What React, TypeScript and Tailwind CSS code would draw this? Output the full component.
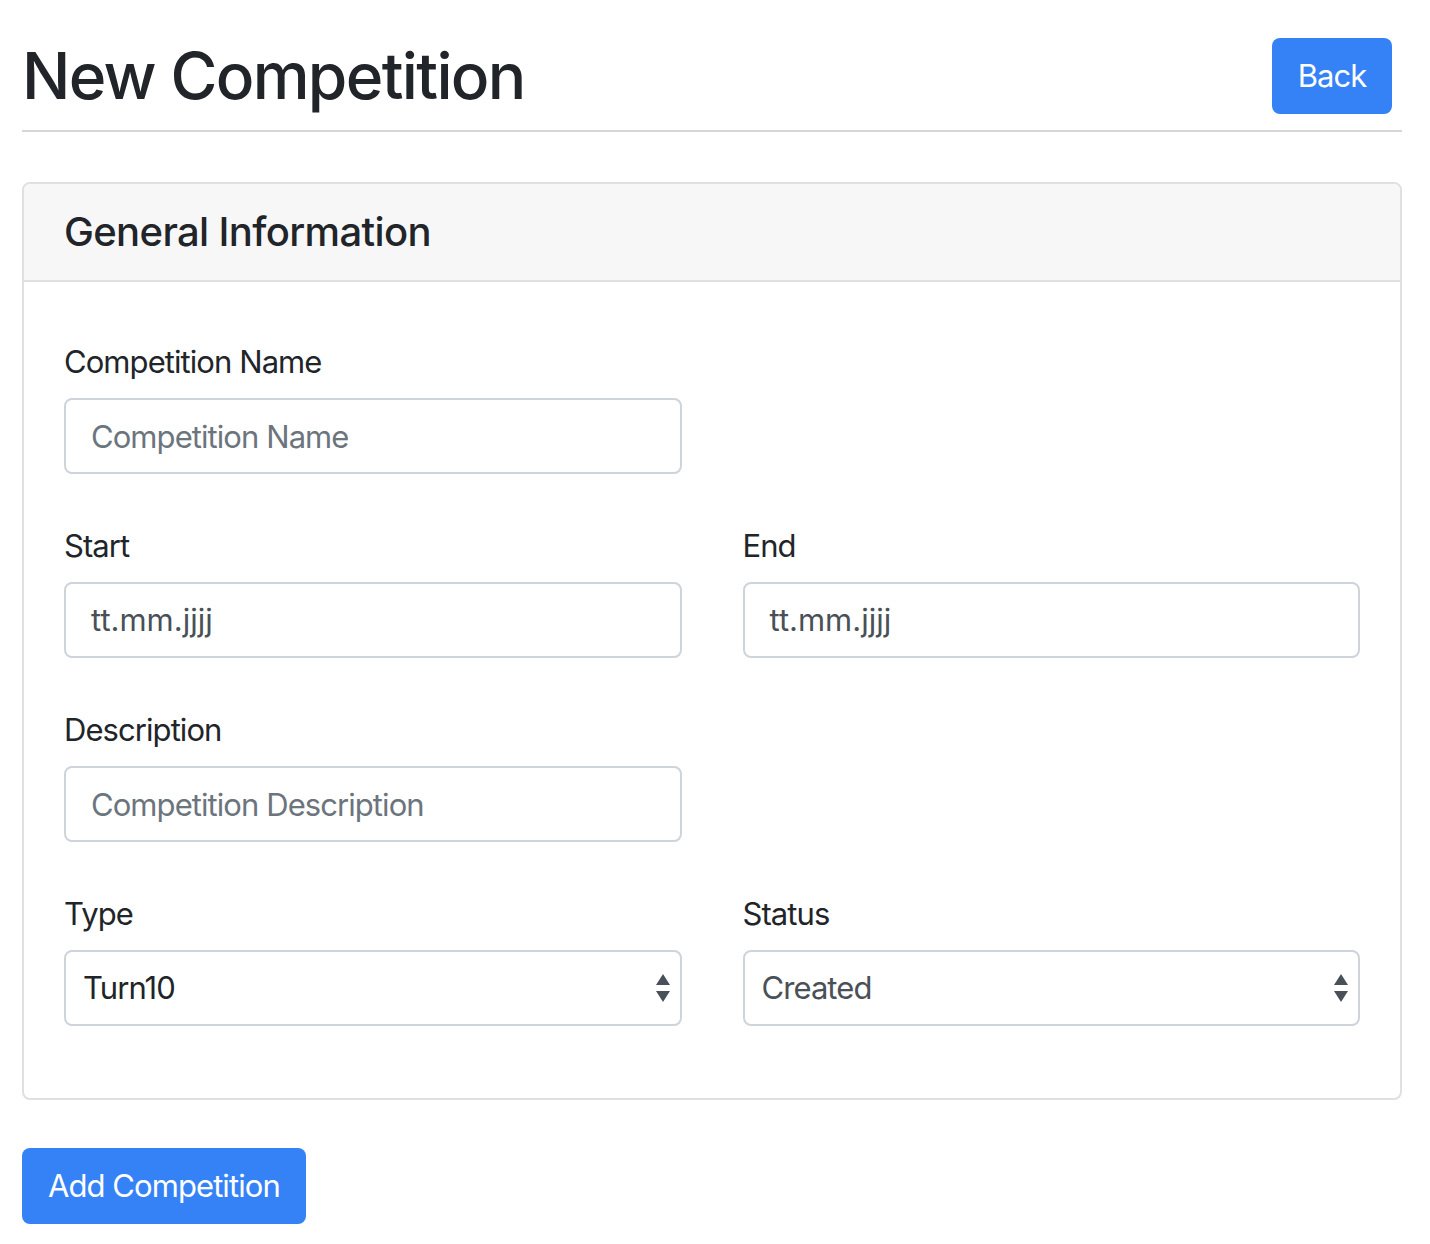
import { ReactNode } from "react";

const font = { fontFamily: "Inter, 'Noto Sans', sans-serif" };

function SelectArrows() {
  return (
    <svg width="14" height="28" viewBox="0 0 14 28" className="shrink-0">
      <path d="M7 0 L14 11 L0 11 Z" fill="#495057" />
      <path d="M0 17 L14 17 L7 28 Z" fill="#495057" />
    </svg>
  );
}

function Field({ label, children }: { label: string; children: ReactNode }) {
  return (
    <div className="mb-[48px] flex flex-col">
      <label className="mb-[12px] text-[31px] leading-[48px] tracking-[-0.03em] text-[#212529]">
        {label}
      </label>
      {children}
    </div>
  );
}

const boxClass =
  "h-[76px] w-full rounded-[8px] border-2 border-[#ced4da] bg-white px-[25px] text-[31px] outline-none";

function TextInput({ placeholder }: { placeholder: string }) {
  return (
    <input
      type="text"
      placeholder={placeholder}
      className={boxClass + " tracking-[-0.03em] text-[#495057] placeholder:text-[#6c757d]"}
      style={font}
    />
  );
}

function DateBox() {
  return (
    <div className={boxClass + " flex items-center text-[#495057]"}>
      <span>tt.mm.jjjj</span>
    </div>
  );
}

function SelectBox({ value, dark }: { value: string; dark?: boolean }) {
  return (
    <div
      className={
        boxClass +
        " flex items-center justify-between pr-[10px] tracking-[-0.03em] " +
        (dark ? "text-[#212529]" : "text-[#495057]")
      }
    >
      <span className="-ml-[8px]">{value}</span>
      <SelectArrows />
    </div>
  );
}

export default function App() {
  return (
    <div className="min-h-screen bg-white" style={font}>
      <div className="ml-[22px] w-[1380px] pt-[38px]">
        {/* === Page header === */}
        <div className="flex items-center justify-between border-b-2 border-[#d6d6d6] pb-[16px]">
          <h1 className="text-[64px] font-medium leading-[76px] tracking-[-0.026em] text-[#212529]">
            New Competition
          </h1>
          <button className="mr-[10px] flex h-[76px] w-[120px] items-center justify-center rounded-[8px] bg-[#3482f6] text-[31px] tracking-[-0.03em] text-white">
            Back
          </button>
        </div>

        {/* === Card === */}
        <div className="mt-[50px] rounded-[8px] border-2 border-[#e0e0e0]">
          <div className="rounded-t-[6px] border-b-2 border-[#e0e0e0] bg-[#f7f7f7] px-[40px] py-[24px]">
            <h4 className="text-[40px] font-medium leading-[48px] tracking-[-0.016em] text-[#212529]">
              General Information
            </h4>
          </div>
          <div className="px-[40px] pt-[56px] pb-[24px]">
            <div className="grid grid-cols-2 gap-x-[61px]">
              <Field label="Competition Name">
                <TextInput placeholder="Competition Name" />
              </Field>
              <div />
              <Field label="Start">
                <DateBox />
              </Field>
              <Field label="End">
                <DateBox />
              </Field>
              <Field label="Description">
                <TextInput placeholder="Competition Description" />
              </Field>
              <div />
              <Field label="Type">
                <SelectBox value="Turn10" dark />
              </Field>
              <Field label="Status">
                <SelectBox value="Created" />
              </Field>
            </div>
          </div>
        </div>

        <button className="mt-[48px] flex h-[76px] items-center rounded-[8px] bg-[#3482f6] px-[26px] text-[31px] tracking-[-0.03em] text-white">
          Add Competition
        </button>
      </div>
    </div>
  );
}
